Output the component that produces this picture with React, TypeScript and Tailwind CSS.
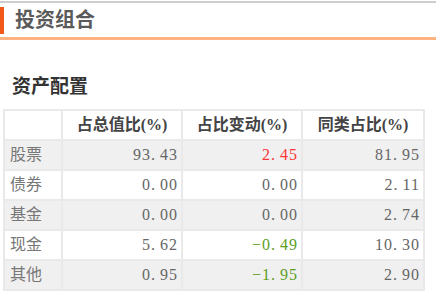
import React from 'react';

interface Row {
  name: string;
  total: string;
  change: string;
  peer: string;
}

const rows: Row[] = [
  { name: '股票', total: '93.43', change: '2.45', peer: '81.95' },
  { name: '债券', total: '0.00', change: '0.00', peer: '2.11' },
  { name: '基金', total: '0.00', change: '0.00', peer: '2.74' },
  { name: '现金', total: '5.62', change: '-0.49', peer: '10.30' },
  { name: '其他', total: '0.95', change: '-1.95', peer: '2.90' },
];

const font = { fontFamily: '"Liberation Serif", "Noto Sans CJK SC", serif' };

function changeColor(v: string) {
  const n = parseFloat(v);
  if (n > 0) return 'text-[#ff3636]';
  if (n < 0) return 'text-[#5d9e1f]';
  return 'text-[#666666]';
}

// half-width period like the original font, so the decimals sit apart
function Num({ value }: { value: string }) {
  const [int, dec] = value.replace('-', '−').split('.');
  return (
    <>
      {int}
      <span className="mr-[4px]">.</span>
      {dec}
    </>
  );
}

export default function App() {
  return (
    <div className="w-[436px] h-[293px] bg-white overflow-hidden" style={font}>
      <div className="h-[2px] mt-[1px] bg-[#cdcdcd]" />

      {/* section title */}
      <div className="flex items-center h-[34px]">
        <div className="w-[4px] h-[27px] bg-[#f2581a]" />
        <span className="ml-[11px] text-[20px] leading-[20px] font-bold text-[#5a5a5a]">投资组合</span>
      </div>
      <div className="h-[3px] bg-[#ffb383]" />

      <div className="mt-[37px] ml-[12px] h-[20px] text-[19px] leading-[20px] font-bold text-[#333333]">
        资产配置
      </div>

      {/* table */}
      <div className="mt-[12px] ml-[3px] w-[422px] grid grid-cols-[56px_118px_118px_120px] gap-[2px] p-[2px] bg-[#e9e9e9] text-[16px] leading-[28px]">
        <div className="bg-white h-[28px]" />
        <div className="bg-white h-[28px] text-center font-bold text-[#444444]">占总值比(%)</div>
        <div className="bg-white h-[28px] text-center font-bold text-[#444444]">占比变动(%)</div>
        <div className="bg-white h-[28px] text-center font-bold text-[#444444]">同类占比(%)</div>
        {rows.map((r, i) => {
          const bg = i % 2 === 0 ? 'bg-[#f0f0f0]' : 'bg-white';
          return (
            <React.Fragment key={r.name}>
              <div className={`${bg} h-[28px] pl-[5px] text-[#777777]`}>{r.name}</div>
              <div className={`${bg} h-[28px] pr-[3px] text-right tracking-[1px] text-[#666666]`}>
                <Num value={r.total} />
              </div>
              <div className={`${bg} h-[28px] pr-[3px] text-right tracking-[1px] ${changeColor(r.change)}`}>
                <Num value={r.change} />
              </div>
              <div className={`${bg} h-[28px] pr-[3px] text-right tracking-[1px] text-[#666666]`}>
                <Num value={r.peer} />
              </div>
            </React.Fragment>
          );
        })}
      </div>
    </div>
  );
}
